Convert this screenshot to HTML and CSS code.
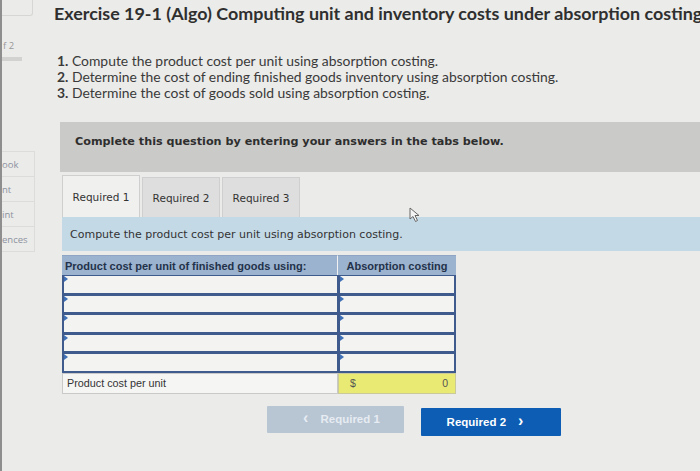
FILE: index.html
```html
<!DOCTYPE html>
<html lang="en">
<head>
<meta charset="utf-8">
<title>Exercise 19-1</title>
<link rel="stylesheet" href="styles.css">
</head>
<body>
<div class="page">
  <aside class="sidebar">
    <div class="sb-top"></div>
    <div class="sb-page">f 2</div>
    <div class="sb-bar"></div>
    <nav class="sb-nav">
      <div class="sb-item">ook</div>
      <div class="sb-item">nt</div>
      <div class="sb-item">int</div>
      <div class="sb-item">ences</div>
    </nav>
  </aside>
  <main class="main">
    <h1 class="title">Exercise 19-1 (Algo) Computing unit and inventory costs under absorption costing</h1>
    <ol class="tasks">
      <li><span class="num">1.</span> Compute the product cost per unit using absorption costing.</li>
      <li><span class="num">2.</span> Determine the cost of ending finished goods inventory using absorption costing.</li>
      <li><span class="num">3.</span> Determine the cost of goods sold using absorption costing.</li>
    </ol>
    <div class="notice">Complete this question by entering your answers in the tabs below.</div>
    <div class="tabs">
      <div class="tab active">Required 1</div>
      <div class="tab">Required 2</div>
      <div class="tab">Required 3</div>
    </div>
    <div class="instruction">Compute the product cost per unit using absorption costing.</div>
    <div class="grid">
      <div class="hd hd-left">Product cost per unit of finished goods using:</div>
      <div class="hd hd-right">Absorption costing</div>
      <div class="in in-left"></div><div class="in in-right"></div>
      <div class="in in-left"></div><div class="in in-right"></div>
      <div class="in in-left"></div><div class="in in-right"></div>
      <div class="in in-left"></div><div class="in in-right"></div>
      <div class="in in-left"></div><div class="in in-right"></div>
      <div class="total-label">Product cost per unit</div>
      <div class="total-value"><span>$</span><span>0</span></div>
    </div>
    <div class="nav-buttons">
      <button class="btn btn-prev" disabled><span class="chev">&lsaquo;</span>Required 1</button>
      <button class="btn btn-next">Required 2<span class="chev">&rsaquo;</span></button>
    </div>
  </main>
  <svg class="cursor" width="12" height="16" viewBox="0 0 12 16"><path d="M1 1 L1 12 L4 9.5 L6.5 14.5 L8.5 13.5 L6 8.5 L10 8.5 Z" fill="#f4f4f4" stroke="#666" stroke-width="1"/></svg>
</div>
</body>
</html>
```
FILE: styles.css
```css
* { box-sizing: border-box; }
html, body { margin: 0; padding: 0; }
body {
  width: 700px;
  height: 471px;
  overflow: hidden;
  background: #ebebe9;
  font-family: Lato, "Open Sans", sans-serif;
  color: #333;
}
.page {
  position: relative;
  display: flex;
  height: 471px;
}
.sidebar {
  width: 36px;
  flex: none;
  border-left: 2px solid #8e8e8e;
  color: #8a8f99;
  font-family: "Open Sans", sans-serif;
  font-size: 9.5px;
}
.sb-top {
  height: 16px;
  width: 31px;
  border: 1px solid #d6d6d4;
  border-top: none;
  border-left: none;
  border-radius: 0 0 3px 0;
}
.sb-page {
  margin-top: 24px;
  line-height: 12px;
  padding-left: 1px;
  color: #999;
}
.sb-bar {
  margin-top: 5px;
  width: 20px;
  height: 4px;
  background: #d2d2d0;
}
.sb-nav {
  margin-top: 91px;
  display: flex;
  flex-direction: column;
}
.sb-item {
  height: 26px;
  line-height: 26px;
  width: 33px;
  border: 1px solid #dcdcda;
  border-left: none;
  margin-top: -1px;
  color: #8d92a0;
}
.main {
  flex: 1;
  padding-left: 19px;
  min-width: 0;
}
.title {
  margin: 2px 0 0 -1px;
  font-size: 17.9px;
  line-height: 22px;
  font-weight: 700;
  white-space: nowrap;
  color: #2f2f2f;
}
.tasks {
  list-style: none;
  margin: 29px 0 0;
  padding: 0 0 0 2px;
  font-size: 13.9px;
  line-height: 16px;
  color: #3a3a3a;
}
.num { font-weight: 700; }
.notice {
  margin: 21px 0 0 5px;
  height: 50px;
  background: #cacac8;
  font-family: "DejaVu Sans", sans-serif;
  font-weight: 700;
  font-size: 11.2px;
  padding-left: 15px;
  line-height: 40px;
  color: #2e2e2e;
}
.tabs {
  display: flex;
  gap: 2px;
  margin: 3px 0 0 7px;
  height: 42px;
  align-items: flex-end;
}
.tab {
  width: 78px;
  height: 40px;
  background: #dedede;
  border: 1px solid #cfcfcf;
  border-bottom: none;
  font-family: "DejaVu Sans", sans-serif;
  font-size: 10.5px;
  color: #333;
  display: flex;
  align-items: center;
  justify-content: center;
}
.tab.active {
  height: 42px;
  background: #f0f0ef;
}
.instruction {
  margin-left: 7px;
  height: 34px;
  background: #c3d9e6;
  font-family: "DejaVu Sans", sans-serif;
  font-size: 11px;
  line-height: 36px;
  padding-left: 8px;
  color: #333;
}
.grid {
  margin: 4px 0 0 7px;
  width: 394px;
  display: grid;
  grid-template-columns: 276px 118px;
  font-family: "Liberation Sans", Arial, sans-serif;
}
.hd {
  height: 20px;
  background: #9cb3cf;
  font-weight: 700;
  font-size: 11px;
  line-height: 20px;
  color: #23324a;
  border-top: 1px solid #8ea6c4;
}
.hd-left { padding-left: 3px; border-right: 1px solid #f1f1f1; }
.hd-right { text-align: center; }
.in {
  position: relative;
  height: 19.5px;
  background: #f3f3f2;
  border: 2px solid #3f5b8e;
  border-top-width: 1px;
}
.in::before {
  content: "";
  position: absolute;
  left: 0;
  top: 0;
  border-left: 4px solid #3f6fb5;
  border-top: 3px solid transparent;
  border-bottom: 3px solid transparent;
}
.in-left { border-right-width: 1px; }
.total-label {
  height: 21px;
  background: #f5f5f4;
  border: 1px solid #c9c9c9;
  font-size: 10.8px;
  line-height: 19px;
  padding-left: 4px;
  color: #333;
}
.total-value {
  height: 21px;
  background: #e9ea74;
  border: 1px solid #c9c99a;
  display: flex;
  justify-content: space-between;
  font-size: 10.5px;
  line-height: 19px;
  padding: 0 7px 0 11px;
  color: #555;
}
.nav-buttons {
  display: flex;
  gap: 17px;
  margin: 12px 0 0 212px;
  align-items: flex-start;
}
.btn {
  height: 27px;
  border: none;
  border-radius: 1px;
  font-family: "Liberation Sans", Arial, sans-serif;
  font-weight: 700;
  font-size: 11.5px;
  padding: 0;
  display: flex;
  align-items: center;
  justify-content: center;
}
.btn-prev {
  width: 137px;
  background: #b8c5d2;
  color: #e6ecf2;
}
.btn-next {
  width: 140px;
  height: 28px;
  margin-top: 2px;
  background: #0c5db3;
  color: #fff;
}
.chev { font-size: 16px; line-height: 1; margin: -2px 12px 0; }
.cursor {
  position: absolute;
  left: 409px;
  top: 207px;
}
```
